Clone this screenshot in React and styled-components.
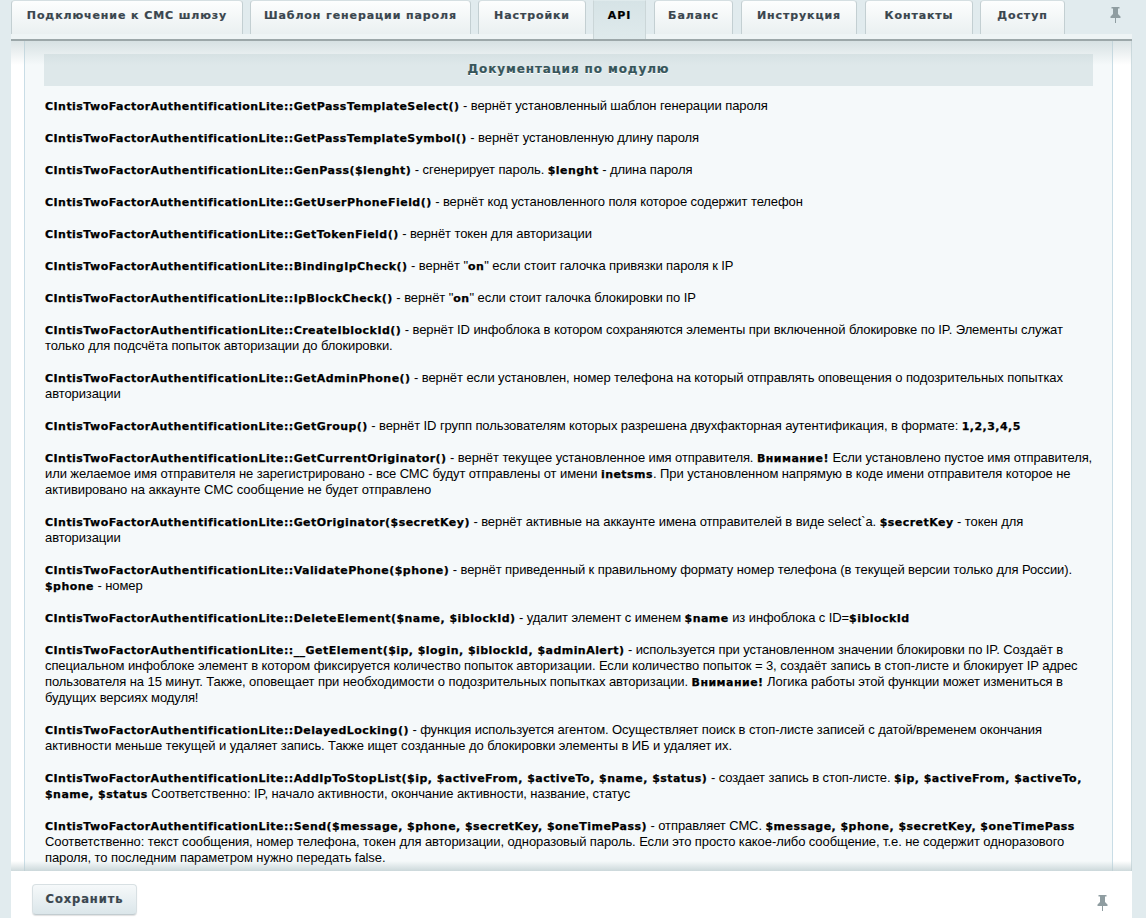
import React from "react";
import styled, { createGlobalStyle } from "styled-components";

const Global = createGlobalStyle`
  html, body { margin: 0; height: 100%; overflow: hidden; }
  body { background: #e1ebee; font-family: "Liberation Sans", Arial, sans-serif; font-size: 13px; letter-spacing: -0.09px; color: #000; }
`;

const Page = styled.div`
  height: 100vh;
  display: flex;
  flex-direction: column;
  padding: 0 14px 0 11px;
  box-sizing: border-box;
`;
const TabBar = styled.div`
  display: flex;
  align-items: flex-start;
  height: 41px;
  flex: none;
  box-sizing: border-box;
  background: linear-gradient(#e1ebee 0 34px, #eef4f5 34px 39px, #9ca7a9 39px 41px);
  position: relative;
`;
const Tab = styled.div`
  flex: none;
  width: ${p => p.$w}px;
  margin-right: ${p => p.$gap}px;
  height: ${p => (p.$active ? 39 : 34)}px;
  box-sizing: border-box;
  text-align: center;
  padding-top: 8px;
  font: 700 11px/14px "DejaVu Sans", sans-serif;
  letter-spacing: 0.9px;
  -webkit-text-stroke: 0.2px currentColor;
  white-space: nowrap;
  color: ${p => (p.$active ? "#000" : "#3a464e")};
  border: 1px solid ${p => (p.$active ? "#cbd6d8" : "#c3cfd2")};
  border-top-color: ${p => (p.$active ? "transparent" : "#d5dfe2")};
  border-bottom: 0;
  border-radius: ${p => (p.$active ? "0" : "4px 4px 0 0")};
  background: ${p => (p.$active ? "linear-gradient(#d6e3e6, #dfeaec)" : "linear-gradient(#fdfefe, #eaf0f1)")};
`;
const PinSlot = styled.div`
  position: absolute;
  left: 1099px;
  top: 7px;
  line-height: 0;
`;
const Body = styled.div`
  flex: 1;
  min-height: 0;
  background: #fff;
  padding: 0 19px 0 13px;
  position: relative;
  overflow: hidden;
  box-shadow: inset -1px 0 #cfdde1;
`;
const Shade = styled.div`
  position: absolute;
  left: 0;
  right: 0;
  height: ${p => p.$h}px;
  ${p => (p.$top ? "top:0;background:linear-gradient(rgba(190,205,208,.55),rgba(190,205,208,0));" : "bottom:0;background:linear-gradient(rgba(190,205,208,0),rgba(190,205,208,.75));")}
`;
const Inner = styled.div`
  height: 100%;
  background: #f5f9fa;
  border-left: 1px solid #c9dde6;
  border-right: 1px solid #c9dde6;
  padding: 13px 19px 0;
  box-sizing: border-box;
  overflow: hidden;
`;
const DocTitle = styled.div`
  height: 32px;
  background: #dee8ea;
  text-align: center;
  font: 700 12px/31px "DejaVu Sans", sans-serif;
  letter-spacing: 0.9px;
  -webkit-text-stroke: 0.2px currentColor;
  color: #36555a;
  text-shadow: 0 1px 0 #fff;
  margin-bottom: 12px;
`;
const Doc = styled.p`
  margin: 0 -6px 16px 1px;
  line-height: 16px;
`;
const B = styled.b`
  font: 700 11px/1 "DejaVu Sans", sans-serif;
  letter-spacing: 0.46px;
  -webkit-text-stroke: 0.25px currentColor;
`;
const Footer = styled.div`
  flex: none;
  height: 47px;
  background: #fff;
  display: flex;
  align-items: flex-start;
  justify-content: space-between;
  padding: 13px 24px 0 21px;
  box-sizing: border-box;
`;
const SaveButton = styled.button`
  width: 105px;
  height: 31px;
  border: 1px solid #d8e0e3;
  border-bottom-color: #c2ccd0;
  border-radius: 4px;
  background: linear-gradient(#f6f9fa, #dbe6ea);
  box-shadow: 0 1px 1px rgba(0, 0, 0, .12);
  font: 700 11.5px/1 "DejaVu Sans", sans-serif;
  letter-spacing: 0.9px;
  -webkit-text-stroke: 0.2px currentColor;
  color: #3a464e;
  padding: 0;
`;
const FooterPin = styled.div`
  margin-top: 11px;
  line-height: 0;
`;

const Pin = () => (
  <svg width="11" height="16" viewBox="0 0 11 16">
    <path d="M1.5 0h8v1.5H8V7l2.5 2.5V11H.5V9.5L3 7V1.5H1.5z" fill="#8f9da1" />
    <rect x="5" y="11" width="1" height="5" fill="#8f9da1" />
  </svg>
);

const tabs = [
  ["Подключение к СМС шлюзу", 232, 7],
  ["Шаблон генерации пароля", 221, 7],
  ["Настройки", 108, 7],
  ["API", 53, 8, true],
  ["Баланс", 79, 8],
  ["Инструкция", 116, 8],
  ["Контакты", 108, 7],
  ["Доступ", 85, 0],
];

export default function App() {
  return (
    <Page>
      <Global />
      <TabBar>
        {tabs.map(([t, w, gap, a]) => (
          <Tab key={t} $w={w} $active={a} $gap={gap}>{t}</Tab>
        ))}
        <PinSlot><Pin /></PinSlot>
      </TabBar>
      <Body>
        <Inner>
          <DocTitle>Документация по модулю</DocTitle>
          <Doc><B>CIntisTwoFactorAuthentificationLite::GetPassTemplateSelect()</B> - вернёт установленный шаблон генерации пароля</Doc>
          <Doc><B>CIntisTwoFactorAuthentificationLite::GetPassTemplateSymbol()</B> - вернёт установленную длину пароля</Doc>
          <Doc><B>CIntisTwoFactorAuthentificationLite::GenPass($lenght)</B> - сгенерирует пароль. <B>$lenght</B> - длина пароля</Doc>
          <Doc><B>CIntisTwoFactorAuthentificationLite::GetUserPhoneField()</B> - вернёт код установленного поля которое содержит телефон</Doc>
          <Doc><B>CIntisTwoFactorAuthentificationLite::GetTokenField()</B> - вернёт токен для авторизации</Doc>
          <Doc><B>CIntisTwoFactorAuthentificationLite::BindingIpCheck()</B> - вернёт "<B>on</B>" если стоит галочка привязки пароля к IP</Doc>
          <Doc><B>CIntisTwoFactorAuthentificationLite::IpBlockCheck()</B> - вернёт "<B>on</B>" если стоит галочка блокировки по IP</Doc>
          <Doc><B>CIntisTwoFactorAuthentificationLite::CreateIblockId()</B> - вернёт ID инфоблока в котором сохраняются элементы при включенной блокировке по IP. Элементы служат только для подсчёта попыток авторизации до блокировки.</Doc>
          <Doc><B>CIntisTwoFactorAuthentificationLite::GetAdminPhone()</B> - вернёт если установлен, номер телефона на который отправлять оповещения о подозрительных попытках авторизации</Doc>
          <Doc><B>CIntisTwoFactorAuthentificationLite::GetGroup()</B> - вернёт ID групп пользователям которых разрешена двухфакторная аутентификация, в формате: <B>1,2,3,4,5</B></Doc>
          <Doc><B>CIntisTwoFactorAuthentificationLite::GetCurrentOriginator()</B> - вернёт текущее установленное имя отправителя. <B>Внимание!</B> Если установлено пустое имя отправителя, или желаемое имя отправителя не зарегистрировано - все СМС будут отправлены от имени <B>inetsms</B>. При установленном напрямую в коде имени отправителя которое не активировано на аккаунте СМС сообщение не будет отправлено</Doc>
          <Doc><B>CIntisTwoFactorAuthentificationLite::GetOriginator($secretKey)</B> - вернёт активные на аккаунте имена отправителей в виде select`а. <B>$secretKey</B> - токен для авторизации</Doc>
          <Doc><B>CIntisTwoFactorAuthentificationLite::ValidatePhone($phone)</B> - вернёт приведенный к правильному формату номер телефона (в текущей версии только для России). <B>$phone</B> - номер</Doc>
          <Doc><B>CIntisTwoFactorAuthentificationLite::DeleteElement($name, $iblockId)</B> - удалит элемент с именем <B>$name</B> из инфоблока с ID=<B>$iblockId</B></Doc>
          <Doc><B>CIntisTwoFactorAuthentificationLite::__GetElement($ip, $login, $iblockId, $adminAlert)</B> - используется при установленном значении блокировки по IP. Создаёт в специальном инфоблоке элемент в котором фиксируется количество попыток авторизации. Если количество попыток = 3, создаёт запись в стоп-листе и блокирует IP адрес пользователя на 15 минут. Также, оповещает при необходимости о подозрительных попытках авторизации. <B>Внимание!</B> Логика работы этой функции может измениться в будущих версиях модуля!</Doc>
          <Doc><B>CIntisTwoFactorAuthentificationLite::DelayedLocking()</B> - функция используется агентом. Осуществляет поиск в стоп-листе записей с датой/временем окончания активности меньше текущей и удаляет запись. Также ищет созданные до блокировки элементы в ИБ и удаляет их.</Doc>
          <Doc><B>CIntisTwoFactorAuthentificationLite::AddIpToStopList($ip, $activeFrom, $activeTo, $name, $status)</B> - создает запись в стоп-листе. <B>$ip, $activeFrom, $activeTo, $name, $status</B> Соответственно: IP, начало активности, окончание активности, название, статус</Doc>
          <Doc><B>CIntisTwoFactorAuthentificationLite::Send($message, $phone, $secretKey, $oneTimePass)</B> - отправляет СМС. <B>$message, $phone, $secretKey, $oneTimePass</B> Соответственно: текст сообщения, номер телефона, токен для авторизации, одноразовый пароль. Если это просто какое-либо сообщение, т.е. не содержит одноразового пароля, то последним параметром нужно передать false.</Doc>
        </Inner>
        <Shade $top $h={24} />
        <Shade $h={10} />
      </Body>
      <Footer>
        <SaveButton>Сохранить</SaveButton>
        <FooterPin><Pin /></FooterPin>
      </Footer>
    </Page>
  );
}
